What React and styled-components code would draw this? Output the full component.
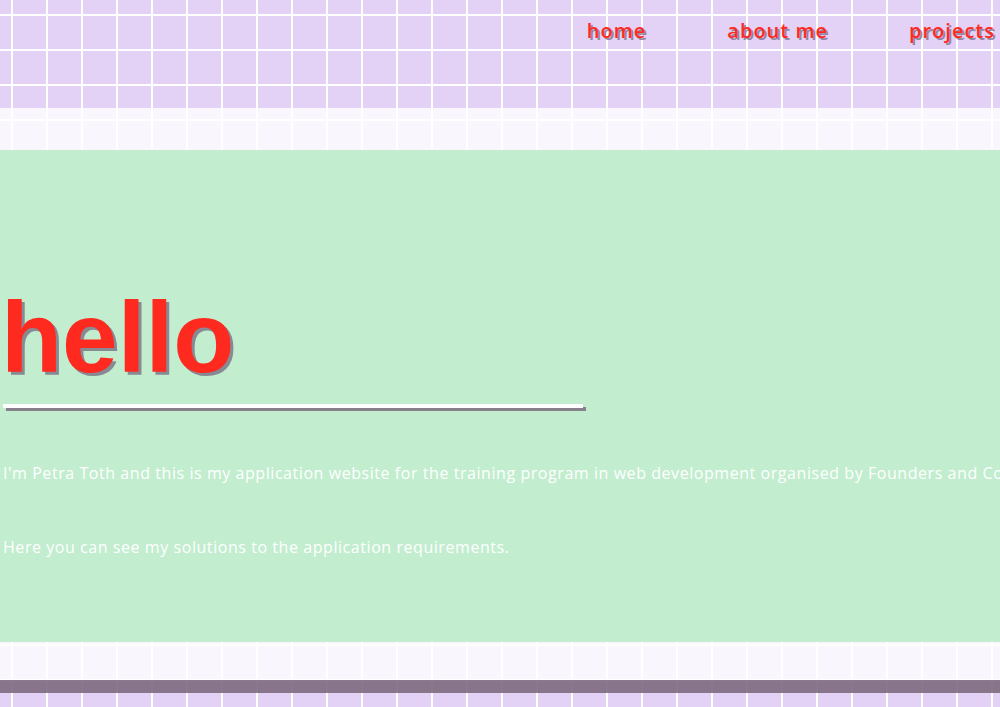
import React from 'react';
import styled, { createGlobalStyle } from 'styled-components';

const GlobalStyle = createGlobalStyle`
	html,
	body {
		margin: 0;
		padding: 0;
		min-height: 100%;
	}

	body {
		overflow-x: hidden;
		font-family: 'Open Sans', 'Liberation Sans', sans-serif;
		background-color: #e3d1f6;
		background-image:
			linear-gradient(to right, #ffffff 2px, transparent 2px),
			linear-gradient(to bottom, #ffffff 2px, transparent 2px);
		background-size: 35px 35px;
		background-position: 11px 14px;
	}
`;

const Page = styled.div`
	display: flex;
	flex-direction: column;
	min-height: 100vh;
`;

const Header = styled.header`
	display: flex;
	justify-content: flex-end;
	align-items: flex-start;
	height: 108px;
	padding-right: 5px;
	box-sizing: border-box;
`;

const Nav = styled.nav`
	display: flex;
	gap: 81px;
	padding-top: 15px;
`;

const NavLink = styled.a`
	font-family: 'Open Sans', sans-serif;
	font-size: 20px;
	font-weight: 600;
	line-height: 32px;
	letter-spacing: 1px;
	color: #ff2a1f;
	text-decoration: none;
	text-shadow: 2px 2px 0 rgba(120, 110, 135, 0.75);
	cursor: pointer;
`;

const Main = styled.main`
	background-color: rgba(255, 255, 255, 0.8);
	padding: 42px 0 38px;
`;

const Hero = styled.section`
	height: 492px;
	box-sizing: border-box;
	padding: 137px 0 0 3px;
	background-color: rgba(187, 236, 202, 0.9);
	white-space: nowrap;
	overflow: hidden;
`;

const Title = styled.h1`
	margin: 0 0 0 -2px;
	font-family: 'Liberation Sans', Arial, sans-serif;
	font-size: 100px;
	font-weight: 700;
	line-height: 100px;
	color: #ff2a1f;
	text-shadow: 3px 3px 0 rgba(125, 120, 135, 0.85);
`;

const Rule = styled.div`
	width: 580px;
	height: 4px;
	margin-top: 17px;
	background-color: #ffffff;
	box-shadow: 3px 3px 0 #86808a;
`;

const Text = styled.p`
	margin: ${props => props.top}px 0 0;
	font-size: 16px;
	line-height: 22px;
	letter-spacing: ${props => props.spacing}px;
	color: #ffffff;
`;

const FooterBar = styled.footer`
	height: 13px;
	background-color: rgba(125, 105, 128, 0.9);
`;

export default function App() {
	return (
		<>
			<GlobalStyle />
			<Page>
				<Header>
					<Nav>
						<NavLink href="#">home</NavLink>
						<NavLink href="#">about me</NavLink>
						<NavLink href="#">projects</NavLink>
					</Nav>
				</Header>
				<Main>
					<Hero>
						<Title>hello</Title>
						<Rule />
						<Text top={54} spacing={0.56}>
							I'm Petra Toth and this is my application website for the training program in web development organised by Founders and Coders.
						</Text>
						<Text top={52} spacing={0.56}>
							Here you can see my solutions to the application requirements.
						</Text>
					</Hero>
				</Main>
				<FooterBar />
			</Page>
		</>
	);
}
